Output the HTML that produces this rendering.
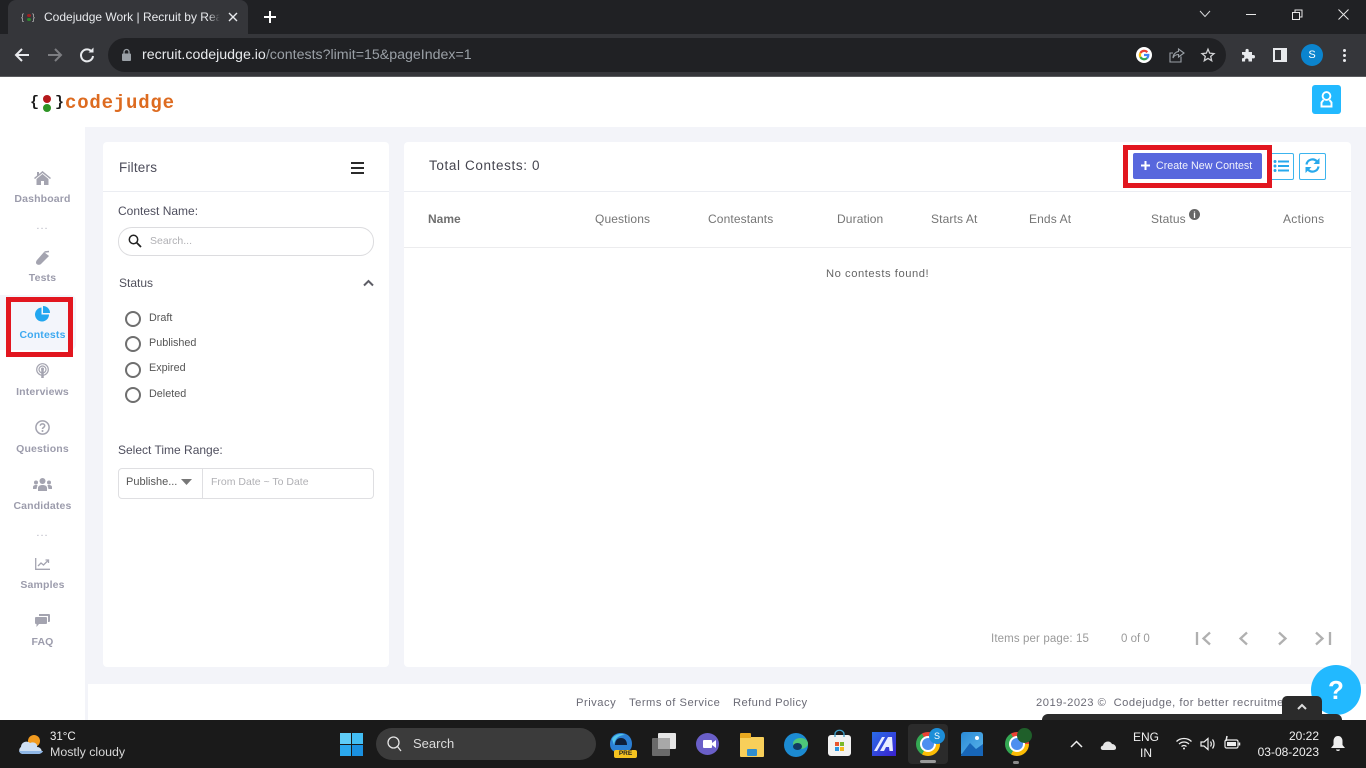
<!DOCTYPE html>
<html lang="en">
<head>
<meta charset="utf-8">
<title>Codejudge Work | Recruit by Real</title>
<style>
html,body{margin:0;padding:0;width:1366px;height:768px;overflow:hidden;background:#f3f4f9;font-family:"Liberation Sans",sans-serif}
.a{position:absolute}
.t{position:absolute;white-space:nowrap;line-height:16px}
svg{position:absolute;overflow:visible}
.nav{position:absolute;left:0;width:85px;text-align:center;font-size:10.5px;font-weight:bold;color:#9c9cac;line-height:14px;letter-spacing:.15px}
.th{position:absolute;white-space:nowrap;font-size:12px;line-height:16px;color:#757575;top:211px;letter-spacing:.12px}
.radio{position:absolute;left:125px;width:12px;height:12px;border:2px solid #6f6f6f;border-radius:50%}
.rl{position:absolute;left:149px;font-size:10.8px;line-height:14px;color:#555;white-space:nowrap}
.dots{position:absolute;left:0;width:85px;text-align:center;font-size:11px;line-height:8px;color:#b5b5c0;letter-spacing:1px}
</style>
</head>
<body>
<!-- Chrome frame -->
<div class="a" style="left:0;top:0;width:1366px;height:34px;background:#202124"></div>
<div class="a" style="left:8px;top:0;width:240px;height:34px;background:#35363a;border-radius:8px 8px 0 0"></div>
<div class="a" style="left:0;top:34px;width:1366px;height:42px;background:#35363a"></div>
<div class="a" style="left:0;top:76px;width:1366px;height:1px;background:#5a5b5e"></div>
<!-- favicon -->
<span class="t" style="left:21px;top:9px;font-size:9px;color:#bbb">{</span>
<span class="a" style="left:27px;top:14px;width:4px;height:3px;background:#a02020;border-radius:50%"></span>
<span class="a" style="left:27px;top:18px;width:4px;height:3px;background:#2d8a2d;border-radius:50%"></span>
<span class="t" style="left:32px;top:9px;font-size:9px;color:#bbb">}</span>
<span class="t" style="left:44px;top:9px;width:176px;overflow:hidden;font-size:12px;color:#e8eaed">Codejudge Work | Recruit by Real</span>
<div class="a" style="left:208px;top:8px;width:12px;height:18px;background:linear-gradient(90deg,rgba(53,54,58,0),#35363a)"></div>
<svg style="left:228px;top:12px" width="10" height="10"><path d="M1 1L9 9M9 1L1 9" stroke="#e8eaed" stroke-width="1.400"/></svg>
<svg style="left:264px;top:11px" width="12" height="12"><path d="M6 0V12M0 6H12" stroke="#fff" stroke-width="2"/></svg>
<!-- window buttons -->
<svg style="left:1199px;top:10px" width="12" height="8"><path d="M1 1L6 6.500L11 1" stroke="#d5d6d8" stroke-width="1" fill="none"/></svg>
<div class="a" style="left:1246px;top:14px;width:10px;height:1px;background:#e8e8e8"></div>
<svg style="left:1292px;top:9px" width="11" height="11"><path d="M.5 3.500H7.500V10.500H.5ZM3 3V1H10V8H8" stroke="#e8e8e8" stroke-width="1" fill="none"/></svg>
<svg style="left:1338px;top:9px" width="11" height="11"><path d="M.5 .5L10.500 10.500M10.500 .5L.5 10.500" stroke="#e8e8e8" stroke-width="1"/></svg>
<!-- toolbar -->
<svg style="left:14px;top:47px" width="16" height="16"><path d="M15 8H2M8 2L2 8L8 14" stroke="#e8eaed" stroke-width="2" fill="none"/></svg>
<svg style="left:47px;top:47px" width="16" height="16"><path d="M1 8H14M8 2L14 8L8 14" stroke="#7d7e82" stroke-width="2" fill="none"/></svg>
<svg style="left:79px;top:47px" width="16" height="16"><path d="M13 5A6 6 0 1 0 14 9" stroke="#e8eaed" stroke-width="2" fill="none"/><path d="M9.500 5.500H14.500V.5Z" fill="#e8eaed"/></svg>
<div class="a" style="left:108px;top:38px;width:1118px;height:34px;background:#202124;border-radius:17px"></div>
<svg style="left:122px;top:49px" width="9" height="12"><rect x="0" y="4.500" width="9" height="7.500" rx="1" fill="#9aa0a6"/><path d="M2 5V3A2.500 2.500 0 0 1 7 3V5" stroke="#9aa0a6" stroke-width="1.300" fill="none"/></svg>
<span class="t" style="left:142px;top:47px;font-size:14.2px;color:#e8eaed">recruit.codejudge.io<span style="color:#9aa0a6">/contests?limit=15&amp;pageIndex=1</span></span>
<!-- G icon -->
<div class="a" style="left:1136px;top:47px;width:16px;height:16px;border-radius:50%;background:#fff"></div>
<svg style="left:1136px;top:47px" width="16" height="16" viewBox="0 0 16 16" fill="none" stroke-width="2.200"><path d="M11.300 5.200A4.300 4.300 0 0 0 4.400 6" stroke="#ea4335"/><path d="M4.400 6A4.300 4.300 0 0 0 4.400 10" stroke="#fbbc05"/><path d="M4.400 10A4.300 4.300 0 0 0 11 11.200" stroke="#34a853"/><path d="M11 11.200A4.300 4.300 0 0 0 12.300 8H8" stroke="#4285f4"/></svg>
<svg style="left:1169px;top:48px" width="16" height="15" viewBox="0 0 16 15" fill="none" stroke="#9aa0a6" stroke-width="1.100"><path d="M12 8.500V14H1V5H4"/><path d="M9.500 1L15 5L9.500 9V6.500C7 6.500 5 7.500 4 10C4 6.500 6.500 4 9.500 3.500Z"/></svg>
<svg style="left:1201px;top:48px" width="14" height="14" viewBox="0 0 14 14"><path d="M7 1.200L8.700 5.200L13 5.600L9.700 8.400L10.700 12.700L7 10.400L3.300 12.700L4.300 8.400L1 5.600L5.300 5.200Z" fill="none" stroke="#d0d1d3" stroke-width="1.300"/></svg>
<svg style="left:1241px;top:48px" width="14" height="14" viewBox="0 0 14 14"><path d="M1 4H4.500V2.500A1.600 1.600 0 0 1 7.700 2.500V4H11V7H12.300A1.700 1.700 0 0 1 12.300 10.400H11V13.500H7.500V12.200A1.700 1.700 0 0 0 4.100 12.200V13.500H1V10.200H2A1.800 1.800 0 0 0 2 6.700H1Z" fill="#e8eaed"/></svg>
<div class="a" style="left:1273px;top:48px;width:14px;height:14px;background:#e8eaed"></div>
<div class="a" style="left:1275px;top:50px;width:6px;height:10px;background:#35363a"></div>
<div class="a" style="left:1301px;top:44px;width:22px;height:22px;border-radius:50%;background:#0b84ce"></div>
<span class="t" style="left:1301px;top:47px;width:22px;text-align:center;font-size:11px;color:#fff">S</span>
<div class="a" style="left:1343px;top:49px;width:3px;height:3px;border-radius:50%;background:#e8eaed;box-shadow:0 5px 0 #e8eaed,0 10px 0 #e8eaed"></div>

<!-- header -->
<div class="a" style="left:0;top:77px;width:1366px;height:50px;background:#fff"></div>
<span class="t" style="left:30px;top:95px;font-size:15px;font-weight:bold;color:#1a1a1a;font-family:'Liberation Mono',monospace">{</span>
<span class="a" style="left:43px;top:95px;width:8px;height:8px;border-radius:50%;background:#b5191c"></span>
<span class="a" style="left:43px;top:104px;width:8px;height:8px;border-radius:50%;background:#2e9425"></span>
<span class="t" style="left:55px;top:95px;font-size:15px;font-weight:bold;color:#1a1a1a;font-family:'Liberation Mono',monospace">}</span>
<span class="t" style="left:65px;top:95px;font-size:19px;font-weight:bold;color:#dd6b20;font-family:'Liberation Mono',monospace;letter-spacing:.8px">codejudge</span>
<div class="a" style="left:1312px;top:85px;width:29px;height:29px;border-radius:3px;background:#22b9ff"></div>
<svg style="left:1320px;top:91px" width="13" height="17" viewBox="0 0 13 17" fill="none" stroke="#fff" stroke-width="1.900"><circle cx="6.500" cy="5" r="3.900"/><path d="M3.500 9L1.500 11.500V15.500H11.500V11.500L9.500 9"/></svg>

<!-- sidebar -->
<div class="a" style="left:0;top:127px;width:85px;height:593px;background:#fff"></div>
<div class="a" style="left:0;top:295px;width:76px;height:55px;background:#f3f5fb;border-radius:0 6px 6px 0"></div>
<svg style="left:34px;top:171px" width="17" height="14" viewBox="0 0 17 14"><path d="M8.500 0L17 7L16 8L8.500 2L1 8L0 7L3 4.500V1H5V3Z" fill="#a4a4b0"/><path d="M2.500 8L8.500 3L14.500 8V14H10V10H7V14H2.500Z" fill="#a4a4b0"/></svg>
<div class="nav" style="top:192px">Dashboard</div>
<div class="dots" style="top:222px">...</div>
<svg style="left:35px;top:251px" width="15" height="14" viewBox="0 0 15 14"><path d="M9 1L14 5L6 13C4.500 14.500 1 14 1 11.500C1 10.500 1.500 9.500 2 9Z" fill="#a4a4b0"/><path d="M9.500 1L14 .5" stroke="#a4a4b0" stroke-width="1.500"/></svg>
<div class="nav" style="top:271px">Tests</div>
<svg style="left:35px;top:306px" width="15" height="15" viewBox="0 0 15 15"><path d="M6.500 1.500V8.500H14A7 7 0 1 1 6.500 1.500Z" fill="#22a7f0"/><path d="M8 0A7 7 0 0 1 15 7H8Z" fill="#22a7f0"/></svg>
<div class="nav" style="top:328px;color:#3ea9f0">Contests</div>
<svg style="left:36px;top:363px" width="13" height="15" viewBox="0 0 13 15" fill="none" stroke="#a4a4b0"><circle cx="6.500" cy="6.500" r="5.800" stroke-width="1.200"/><circle cx="6.500" cy="6.500" r="3.500" stroke-width="1.200"/><circle cx="6.500" cy="6" r="1.500" fill="#a4a4b0" stroke="none"/><path d="M6.500 7V15" stroke-width="2.500"/></svg>
<div class="nav" style="top:385px">Interviews</div>
<svg style="left:35px;top:420px" width="15" height="15" viewBox="0 0 15 15"><circle cx="7.500" cy="7.500" r="6.600" fill="none" stroke="#a4a4b0" stroke-width="1.500"/><path d="M5.300 5.800C5.300 3.200 9.700 3.200 9.700 5.800C9.700 7.400 7.500 7.400 7.500 9" fill="none" stroke="#a4a4b0" stroke-width="1.500"/><circle cx="7.500" cy="11" r="1" fill="#a4a4b0"/></svg>
<div class="nav" style="top:442px">Questions</div>
<svg style="left:33px;top:478px" width="19" height="14" viewBox="0 0 19 14" fill="#a4a4b0"><circle cx="9.500" cy="3" r="3"/><circle cx="3" cy="4.500" r="2"/><circle cx="16" cy="4.500" r="2"/><path d="M5 13V10C5 8 7 7 9.500 7S14 8 14 10V13Z"/><path d="M0 11V9C0 8 1 7 3 7H4.500L3.500 11ZM19 11V9C19 8 18 7 16 7H14.500L15.500 11Z"/></svg>
<div class="nav" style="top:499px">Candidates</div>
<div class="dots" style="top:529px">...</div>
<svg style="left:35px;top:558px" width="15" height="12" viewBox="0 0 15 12" fill="none" stroke="#a4a4b0" stroke-width="1.300"><path d="M.7 0V11.300H15"/><path d="M3 8L6 5L8.500 7L13 2.500"/><path d="M10.500 2H13.500V5"/></svg>
<div class="nav" style="top:578px">Samples</div>
<svg style="left:35px;top:614px" width="15" height="14" viewBox="0 0 15 14" fill="#a4a4b0"><path d="M4 0H14A1 1 0 0 1 15 1V7A1 1 0 0 1 14 8H13V2H4Z"/><path d="M1 3H11A1 1 0 0 1 12 4V9A1 1 0 0 1 11 10H4L1.500 13V10H1A1 1 0 0 1 0 9V4A1 1 0 0 1 1 3Z"/></svg>
<div class="nav" style="top:635px">FAQ</div>
<!-- red highlight sidebar -->
<div class="a" style="left:6px;top:297px;width:57px;height:50px;border:5px solid #e2161f"></div>

<!-- filters panel -->
<div class="a" style="left:103px;top:142px;width:286px;height:525px;background:#fff;border-radius:4px"></div>
<div class="a" style="left:103px;top:191px;width:286px;height:1px;background:#ebedf2"></div>
<span class="t" style="left:119px;top:160px;font-size:13.5px;color:#4c4c5a;letter-spacing:.2px">Filters</span>
<svg style="left:351px;top:162px" width="13" height="12" fill="#2b2b2b"><rect width="13" height="2" y="0"/><rect width="13" height="2" y="5"/><rect width="13" height="2" y="10"/></svg>
<span class="t" style="left:118px;top:203px;font-size:12px;color:#4f4f5e">Contest Name:</span>
<div class="a" style="left:118px;top:227px;width:254px;height:27px;border:1px solid #dcdcdf;border-radius:14px"></div>
<svg style="left:128px;top:234px" width="14" height="14" viewBox="0 0 14 14" fill="none" stroke="#222"><circle cx="5.500" cy="5.500" r="4.200" stroke-width="1.500"/><path d="M8.500 8.500L13 13" stroke-width="1.800"/></svg>
<span class="t" style="left:150px;top:233px;font-size:10.500px;color:#b0b0b4">Search...</span>
<span class="t" style="left:119px;top:275px;font-size:12px;color:#50505c">Status</span>
<svg style="left:363px;top:279px" width="11" height="8"><path d="M1 6.500L5.500 2L10 6.500" stroke="#5e5e66" stroke-width="2" fill="none"/></svg>
<div class="radio" style="top:311px"></div><span class="rl" style="top:311px">Draft</span>
<div class="radio" style="top:336px"></div><span class="rl" style="top:336px">Published</span>
<div class="radio" style="top:362px"></div><span class="rl" style="top:361px">Expired</span>
<div class="radio" style="top:387px"></div><span class="rl" style="top:387px">Deleted</span>
<span class="t" style="left:118px;top:442px;font-size:12px;color:#4f4f5e">Select Time Range:</span>
<div class="a" style="left:118px;top:468px;width:254px;height:29px;border:1px solid #dfdfe2;border-radius:4px"></div>
<div class="a" style="left:202px;top:469px;width:1px;height:29px;background:#dfdfe2"></div>
<span class="t" style="left:126px;top:474px;font-size:11px;color:#555">Publishe...</span>
<svg style="left:181px;top:479px" width="11" height="6"><path d="M0 0H11L5.500 6Z" fill="#777"/></svg>
<span class="t" style="left:211px;top:474px;font-size:10.500px;color:#b0b0b4">From Date ~ To Date</span>

<!-- main panel -->
<div class="a" style="left:404px;top:142px;width:947px;height:525px;background:#fff;border-radius:4px"></div>
<div class="a" style="left:404px;top:191px;width:947px;height:1px;background:#ebedf2"></div>
<div class="a" style="left:404px;top:247px;width:947px;height:1px;background:#ececee"></div>
<span class="t" style="left:429px;top:158px;font-size:13.500px;color:#45454f;letter-spacing:.62px">Total Contests: 0</span>
<div class="a" style="left:1133px;top:153px;width:129px;height:26px;background:#5867dd;border-radius:2px"></div>
<svg style="left:1141px;top:161px" width="9" height="9"><path d="M4.500 0V9M0 4.500H9" stroke="#fff" stroke-width="2"/></svg>
<span class="t" style="left:1156px;top:158px;font-size:10.700px;color:#f2f3fc">Create New Contest</span>
<div class="a" style="left:1123px;top:145px;width:139px;height:33px;border:5px solid #e2161f"></div>
<div class="a" style="left:1272px;top:153px;width:21px;height:25px;border:1px solid #3cb4ee;border-left:0;border-radius:0 2px 2px 0"></div>
<svg style="left:1273px;top:160px" width="16" height="12" fill="#28a9ec"><circle cx="2" cy="1.500" r="1.500"/><circle cx="2" cy="6" r="1.500"/><circle cx="2" cy="10.500" r="1.500"/><rect x="5" y=".5" width="11" height="2"/><rect x="5" y="5" width="11" height="2"/><rect x="5" y="9.500" width="11" height="2"/></svg>
<div class="a" style="left:1299px;top:153px;width:25px;height:25px;border:1px solid #3cb4ee;border-radius:2px"></div>
<svg style="left:1305px;top:158px" width="15" height="15" viewBox="0 0 15 15" fill="none" stroke="#28a9ec" stroke-width="2.200"><path d="M1.500 6.500A6 6 0 0 1 12 3.500"/><path d="M13.500 8.500A6 6 0 0 1 3 11.500"/><path d="M14.500 0V6H8.500Z" fill="#28a9ec" stroke="none"/><path d="M.5 15V9H6.500Z" fill="#28a9ec" stroke="none"/></svg>

<span class="th" style="left:428px;font-weight:bold;color:#6f6f6f;letter-spacing:0">Name</span>
<span class="th" style="left:595px">Questions</span>
<span class="th" style="left:708px">Contestants</span>
<span class="th" style="left:837px">Duration</span>
<span class="th" style="left:931px">Starts At</span>
<span class="th" style="left:1029px">Ends At</span>
<span class="th" style="left:1151px">Status</span>
<div class="a" style="left:1189px;top:209px;width:11px;height:11px;border-radius:50%;background:#666"></div>
<span class="t" style="left:1189px;top:207px;width:11px;text-align:center;font-size:9px;font-weight:bold;color:#fff">i</span>
<span class="th" style="left:1283px;letter-spacing:.3px">Actions</span>
<span class="t" style="left:826px;top:266px;font-size:11.200px;color:#666;letter-spacing:.55px">No contests found!</span>

<span class="t" style="left:991px;top:631px;font-size:11.500px;color:#9a9a9a;letter-spacing:.12px">Items per page: 15</span>
<span class="t" style="left:1121px;top:631px;font-size:11.500px;color:#9a9a9a">0 of 0</span>
<svg style="left:1195px;top:631px" width="18" height="15" fill="none" stroke="#b0b0b0" stroke-width="2.300"><path d="M2 1V14"/><path d="M15 1.500L8.500 7.500L15 13.500"/></svg>
<svg style="left:1237px;top:631px" width="12" height="15" fill="none" stroke="#b0b0b0" stroke-width="2.300"><path d="M10 1.500L3.500 7.500L10 13.500"/></svg>
<svg style="left:1277px;top:631px" width="12" height="15" fill="none" stroke="#b0b0b0" stroke-width="2.300"><path d="M2 1.500L8.500 7.500L2 13.500"/></svg>
<svg style="left:1315px;top:631px" width="17" height="15" fill="none" stroke="#b0b0b0" stroke-width="2.300"><path d="M1 1.500L7.500 7.500L1 13.500"/><path d="M15 1V14"/></svg>

<!-- footer -->
<div class="a" style="left:88px;top:684px;width:1278px;height:36px;background:#fff"></div>
<span class="t" style="left:576px;top:694.500px;font-size:11.200px;color:#6b6b76;letter-spacing:.5px">Privacy</span>
<span class="t" style="left:629px;top:694.500px;font-size:11.200px;color:#6b6b76;letter-spacing:.5px">Terms of Service</span>
<span class="t" style="left:733px;top:694.500px;font-size:11.200px;color:#6b6b76;letter-spacing:.42px">Refund Policy</span>
<span class="t" style="left:1036px;top:694.500px;font-size:11.200px;color:#6b6b76;letter-spacing:.5px">2019-2023 ©&nbsp; Codejudge, for better recruitment</span>
<div class="a" style="left:1311px;top:665px;width:50px;height:50px;border-radius:50%;background:#22b9ff"></div>
<span class="t" style="left:1311px;top:678px;width:50px;height:24px;line-height:24px;text-align:center;font-size:26px;font-weight:bold;color:#fff">?</span>
<div class="a" style="left:1042px;top:714px;width:300px;height:8px;background:#2b2b2b;border-radius:6px 6px 0 0"></div>
<div class="a" style="left:1282px;top:696px;width:40px;height:24px;background:#2b2b2b;border-radius:5px 5px 0 0"></div>
<svg style="left:1297px;top:703px" width="10" height="7"><path d="M1 6L5 2L9 6" stroke="#ddd" stroke-width="2" fill="none"/></svg>

<!-- taskbar -->
<div class="a" style="left:0;top:720px;width:1366px;height:48px;background:#1a1a1a"></div>
<svg style="left:18px;top:733px" width="26" height="22" viewBox="0 0 26 22"><circle cx="16" cy="8" r="6" fill="#f19a1f"/><path d="M5 21C1 21 0 16 3 14C3 9 9 7 12 10C16 8 20 11 19 14C24 14 26 21 20 21Z" fill="#cfe0f4"/><path d="M5 21C3 21 1 19 1 18H25C25 19 23 21 20 21Z" fill="#8fb7e6"/></svg>
<span class="t" style="left:50px;top:729px;font-size:11.500px;color:#f0f0f0">31°C</span>
<span class="t" style="left:50px;top:744px;font-size:12.400px;color:#d8d8d8">Mostly cloudy</span>
<svg style="left:340px;top:733px" width="23" height="23"><rect x="0" y="0" width="11" height="11" fill="#5fcdf8"/><rect x="12" y="0" width="11" height="11" fill="#42bdf3"/><rect x="0" y="12" width="11" height="11" fill="#2ba9ee"/><rect x="12" y="12" width="11" height="11" fill="#1a90e0"/></svg>
<div class="a" style="left:376px;top:728px;width:220px;height:32px;border-radius:16px;background:#3b3b3b"></div>
<svg style="left:387px;top:736px" width="15" height="16" fill="none" stroke="#e4e4e4" stroke-width="1.300"><circle cx="6.500" cy="6.500" r="5.500"/><path d="M10.500 10.500L14 15"/></svg>
<span class="t" style="left:413px;top:736px;font-size:13px;color:#dcdcdc">Search</span>

<!-- taskbar apps -->
<svg style="left:609px;top:732px" width="24" height="27" viewBox="0 0 24 27"><path d="M12 1C19 1 23 6 23 12C23 18 19 21 12 21C5 21 1 18 1 12C1 6 5 1 12 1Z" fill="#2b7fd4"/><path d="M12 6C16 6 18 9 18 13H6C6 9 8 6 12 6Z" fill="#0f1f3a"/><path d="M3 7C6 2 12 1 16 3C10 3 6 6 5 13Z" fill="#54c6ea"/></svg>
<div class="a" style="left:614px;top:750px;width:23px;height:8px;border-radius:2px;background:#f5c320"></div>
<span class="t" style="left:614px;top:750px;width:23px;text-align:center;font-size:6.500px;line-height:8px;font-weight:bold;color:#222">PRE</span>
<div class="a" style="left:652px;top:738px;width:18px;height:18px;background:#6a6a6a;border-radius:1px"></div>
<div class="a" style="left:658px;top:733px;width:18px;height:16px;background:#e6e6e6;border-radius:1px"></div>
<div class="a" style="left:658px;top:738px;width:12px;height:11px;background:#a8a8a8"></div>
<div class="a" style="left:696px;top:733px;width:23px;height:22px;border-radius:50%;background:#6a5fc8"></div>
<div class="a" style="left:703px;top:740px;width:9px;height:8px;background:#fff;border-radius:1px"></div>
<svg style="left:712px;top:740px" width="4" height="8"><path d="M0 3L4 0V8L0 5Z" fill="#fff"/></svg>
<div class="a" style="left:740px;top:737px;width:24px;height:20px;background:#f8cf5a;border-radius:1px"></div>
<div class="a" style="left:740px;top:733px;width:11px;height:5px;background:#e8a820;border-radius:1px 1px 0 0"></div>
<div class="a" style="left:747px;top:749px;width:10px;height:7px;background:#2f8ecf;border-radius:1px"></div>
<div class="a" style="left:784px;top:733px;width:24px;height:24px;border-radius:50%;background:#1c8bd2"></div>
<div class="a" style="left:793px;top:738px;width:15px;height:11px;border-radius:50%;background:#4ec779"></div>
<div class="a" style="left:793px;top:743px;width:9px;height:7px;border-radius:50%;background:#123a60"></div>
<div class="a" style="left:828px;top:735px;width:23px;height:21px;border-radius:3px;background:#f2f2f2"></div>
<svg style="left:834px;top:731px" width="11" height="6"><path d="M1 6V3A3 2.500 0 0 1 10 3V6" stroke="#3d9ec9" stroke-width="1.300" fill="none"/></svg>
<div class="a" style="left:835px;top:742px;width:4px;height:4px;background:#e8552d"></div>
<div class="a" style="left:840px;top:742px;width:4px;height:4px;background:#7ab829"></div>
<div class="a" style="left:835px;top:747px;width:4px;height:4px;background:#2b96e0"></div>
<div class="a" style="left:840px;top:747px;width:4px;height:4px;background:#f5b81e"></div>
<div class="a" style="left:872px;top:732px;width:24px;height:24px;background:linear-gradient(135deg,#2a6de8,#3a22d0)"></div>
<svg style="left:874px;top:736px" width="20" height="16"><path d="M0 15L8 1H11L3 15ZM6 15L14 1H18L19 15H15.500L15 11H12L10 15Z" fill="#e8ecff"/></svg>
<div class="a" style="left:908px;top:724px;width:40px;height:40px;background:#2b2b2b;border-radius:4px"></div>
<div class="a" style="left:916px;top:732px;width:24px;height:24px;border-radius:50%;background:conic-gradient(from -30deg,#ea4335 0 120deg,#fbbc05 120deg 240deg,#34a853 240deg 360deg)"></div>
<div class="a" style="left:922px;top:738px;width:12px;height:12px;border-radius:50%;background:#4d8ff0;border:0;box-shadow:0 0 0 2px #fff"></div>
<div class="a" style="left:929px;top:728px;width:16px;height:16px;border-radius:50%;background:#1d8ed8"></div>
<span class="t" style="left:929px;top:728px;width:16px;text-align:center;font-size:9px;color:#fff">S</span>
<div class="a" style="left:920px;top:760px;width:16px;height:3px;border-radius:2px;background:#9a9a9a"></div>
<div class="a" style="left:961px;top:732px;width:22px;height:24px;border-radius:3px;background:linear-gradient(135deg,#2a8ad6,#5bb6ea)"></div>
<svg style="left:961px;top:738px" width="22" height="18"><path d="M0 17L9 5L15 11L22 6V18H0Z" fill="#1766b8"/></svg>
<div class="a" style="left:975px;top:736px;width:4px;height:4px;border-radius:50%;background:#fff"></div>
<div class="a" style="left:1005px;top:732px;width:24px;height:24px;border-radius:50%;background:conic-gradient(from -30deg,#ea4335 0 120deg,#fbbc05 120deg 240deg,#34a853 240deg 360deg)"></div>
<div class="a" style="left:1011px;top:738px;width:12px;height:12px;border-radius:50%;background:#4d8ff0;box-shadow:0 0 0 2px #fff"></div>
<div class="a" style="left:1017px;top:728px;width:15px;height:15px;border-radius:50%;background:#1f5f2a"></div>
<div class="a" style="left:1013px;top:761px;width:6px;height:3px;border-radius:2px;background:#8a8a8a"></div>

<!-- tray -->
<svg style="left:1070px;top:740px" width="13" height="8"><path d="M1 7L6.500 1.500L12 7" stroke="#eee" stroke-width="1.500" fill="none"/></svg>
<svg style="left:1100px;top:738px" width="17" height="12"><path d="M3 12C0 12 0 8 3 7.500C4 3 10 2 12 6C16 6 18 12 13.500 12Z" fill="#e6e6e6"/></svg>
<span class="t" style="left:1126px;top:729px;width:40px;text-align:center;font-size:12px;color:#f0f0f0">ENG</span>
<span class="t" style="left:1126px;top:745px;width:40px;text-align:center;font-size:12px;color:#f0f0f0">IN</span>
<svg style="left:1176px;top:737px" width="16" height="13" fill="none" stroke="#eee" stroke-width="1.300"><path d="M.5 4.500C4.500 .5 11.500 .5 15.500 4.500"/><path d="M3 7C6 4.300 10 4.300 13 7"/><path d="M5.500 9.500C7 8.300 9 8.300 10.500 9.500"/><circle cx="8" cy="11.500" r="1" fill="#eee" stroke="none"/></svg>
<svg style="left:1200px;top:737px" width="16" height="14" fill="none" stroke="#eee" stroke-width="1.200"><path d="M1 5H4L8 1.500V12.500L4 9H1Z"/><path d="M10.500 4.500C11.500 6 11.500 8 10.500 9.500"/><path d="M12.500 2.500C14.500 5 14.500 9 12.500 11.500"/></svg>
<svg style="left:1224px;top:736px" width="17" height="14" fill="none" stroke="#eee" stroke-width="1.200"><rect x="1" y="4" width="13" height="8" rx="1.500"/><rect x="3" y="6" width="9" height="4" fill="#eee" stroke="none"/><path d="M15.500 6.500V9.500" stroke-width="1.500"/><path d="M3 0L2 5" stroke-width="1.500"/></svg>
<span class="t" style="left:1250px;top:728px;width:69px;text-align:right;font-size:12px;color:#f0f0f0">20:22</span>
<span class="t" style="left:1250px;top:744px;width:69px;text-align:right;font-size:12px;color:#f0f0f0">03-08-2023</span>
<svg style="left:1331px;top:736px" width="14" height="16" viewBox="0 0 14 16"><path d="M7 0C10 0 11.500 2.500 11.500 5V9L14 12H0L2.500 9V5C2.500 2.500 4 0 7 0Z" fill="#eee"/><path d="M5 13.500H9C9 15.500 5 15.500 5 13.500Z" fill="#eee"/></svg>
</body>
</html>
